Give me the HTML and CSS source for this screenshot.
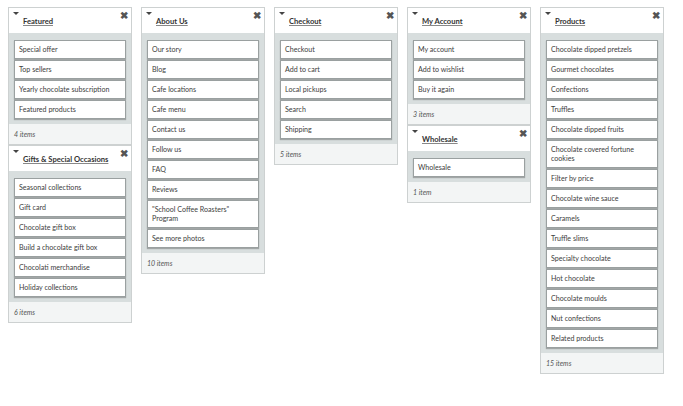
FILE: index.html
```html
<!DOCTYPE html>
<html lang="en">
<head>
<meta charset="UTF-8">
<title>Menus</title>
<link rel="stylesheet" href="styles.css">
</head>
<body>

<div class="board">

  <div class="column">
    <div class="panel">
      <div class="panel-head">
        <span class="caret"></span>
        <a class="title" href="#">Featured</a>
        <span class="close">&#10006;</span>
      </div>
      <div class="panel-body">
        <div class="item">Special offer</div>
        <div class="item">Top sellers</div>
        <div class="item">Yearly chocolate subscription</div>
        <div class="item">Featured products</div>
      </div>
      <div class="panel-foot">4 items</div>
    </div>
    <div class="panel">
      <div class="panel-head">
        <span class="caret"></span>
        <a class="title" href="#">Gifts &amp; Special Occasions</a>
        <span class="close">&#10006;</span>
      </div>
      <div class="panel-body">
        <div class="item">Seasonal collections</div>
        <div class="item">Gift card</div>
        <div class="item">Chocolate gift box</div>
        <div class="item">Build a chocolate gift box</div>
        <div class="item">Chocolati merchandise</div>
        <div class="item">Holiday collections</div>
      </div>
      <div class="panel-foot">6 items</div>
    </div>
  </div>

  <div class="column">
    <div class="panel">
      <div class="panel-head">
        <span class="caret"></span>
        <a class="title" href="#">About Us</a>
        <span class="close">&#10006;</span>
      </div>
      <div class="panel-body">
        <div class="item">Our story</div>
        <div class="item">Blog</div>
        <div class="item">Cafe locations</div>
        <div class="item">Cafe menu</div>
        <div class="item">Contact us</div>
        <div class="item">Follow us</div>
        <div class="item">FAQ</div>
        <div class="item">Reviews</div>
        <div class="item">"School Coffee Roasters" Program</div>
        <div class="item">See more photos</div>
      </div>
      <div class="panel-foot">10 items</div>
    </div>
  </div>

  <div class="column">
    <div class="panel">
      <div class="panel-head">
        <span class="caret"></span>
        <a class="title" href="#">Checkout</a>
        <span class="close">&#10006;</span>
      </div>
      <div class="panel-body">
        <div class="item">Checkout</div>
        <div class="item">Add to cart</div>
        <div class="item">Local pickups</div>
        <div class="item">Search</div>
        <div class="item">Shipping</div>
      </div>
      <div class="panel-foot">5 items</div>
    </div>
  </div>

  <div class="column">
    <div class="panel">
      <div class="panel-head">
        <span class="caret"></span>
        <a class="title" href="#">My Account</a>
        <span class="close">&#10006;</span>
      </div>
      <div class="panel-body">
        <div class="item">My account</div>
        <div class="item">Add to wishlist</div>
        <div class="item">Buy it again</div>
      </div>
      <div class="panel-foot">3 items</div>
    </div>
    <div class="panel">
      <div class="panel-head">
        <span class="caret"></span>
        <a class="title" href="#">Wholesale</a>
        <span class="close">&#10006;</span>
      </div>
      <div class="panel-body">
        <div class="item">Wholesale</div>
      </div>
      <div class="panel-foot">1 item</div>
    </div>
  </div>

  <div class="column">
    <div class="panel">
      <div class="panel-head">
        <span class="caret"></span>
        <a class="title" href="#">Products</a>
        <span class="close">&#10006;</span>
      </div>
      <div class="panel-body">
        <div class="item">Chocolate dipped pretzels</div>
        <div class="item">Gourmet chocolates</div>
        <div class="item">Confections</div>
        <div class="item">Truffles</div>
        <div class="item">Chocolate dipped fruits</div>
        <div class="item">Chocolate covered fortune cookies</div>
        <div class="item">Filter by price</div>
        <div class="item">Chocolate wine sauce</div>
        <div class="item">Caramels</div>
        <div class="item">Truffle slims</div>
        <div class="item">Specialty chocolate</div>
        <div class="item">Hot chocolate</div>
        <div class="item">Chocolate moulds</div>
        <div class="item">Nut confections</div>
        <div class="item">Related products</div>
      </div>
      <div class="panel-foot">15 items</div>
    </div>
  </div>

</div>

</body>
</html>
```

FILE: styles.css
```css
body { margin: 0; background: #fff; font-family: Lato, "Open Sans", sans-serif; color: #3d3d3d; }
.board { display: flex; align-items: flex-start; gap: 9px; padding: 7px 8px; }
.column { width: 124px; display: flex; flex-direction: column; }
.panel { border: 1px solid #cdd1d1; background: #fff; box-sizing: border-box; }
.panel-head { position: relative; height: 25px; background: #fff; }
.caret { position: absolute; left: 4px; top: 4px; width: 0; height: 0; border-left: 3px solid transparent; border-right: 3px solid transparent; border-top: 3px solid #444; }
.title { position: absolute; left: 14px; top: 8px; font-size: 7.6px; font-weight: bold; color: #333; text-decoration: underline; text-decoration-color: #888; text-underline-offset: 1px; }
.close { position: absolute; right: 3px; top: 1px; font-size: 10px; color: #555; font-weight: bold; }
.panel-body { background: #d8dede; padding: 7px 5px 4px; }
.item { background: #fff; border: 1px solid #9aa0a0; box-shadow: 0 1px 1px rgba(0,0,0,0.25); padding: 4px 4px; margin-bottom: 1px; font-size: 7.1px; line-height: 9px; }
.panel-foot { height: 20px; line-height: 20px; background: #f3f5f5; padding: 0 5px; font-size: 7px; font-style: italic; color: #555; }
```
